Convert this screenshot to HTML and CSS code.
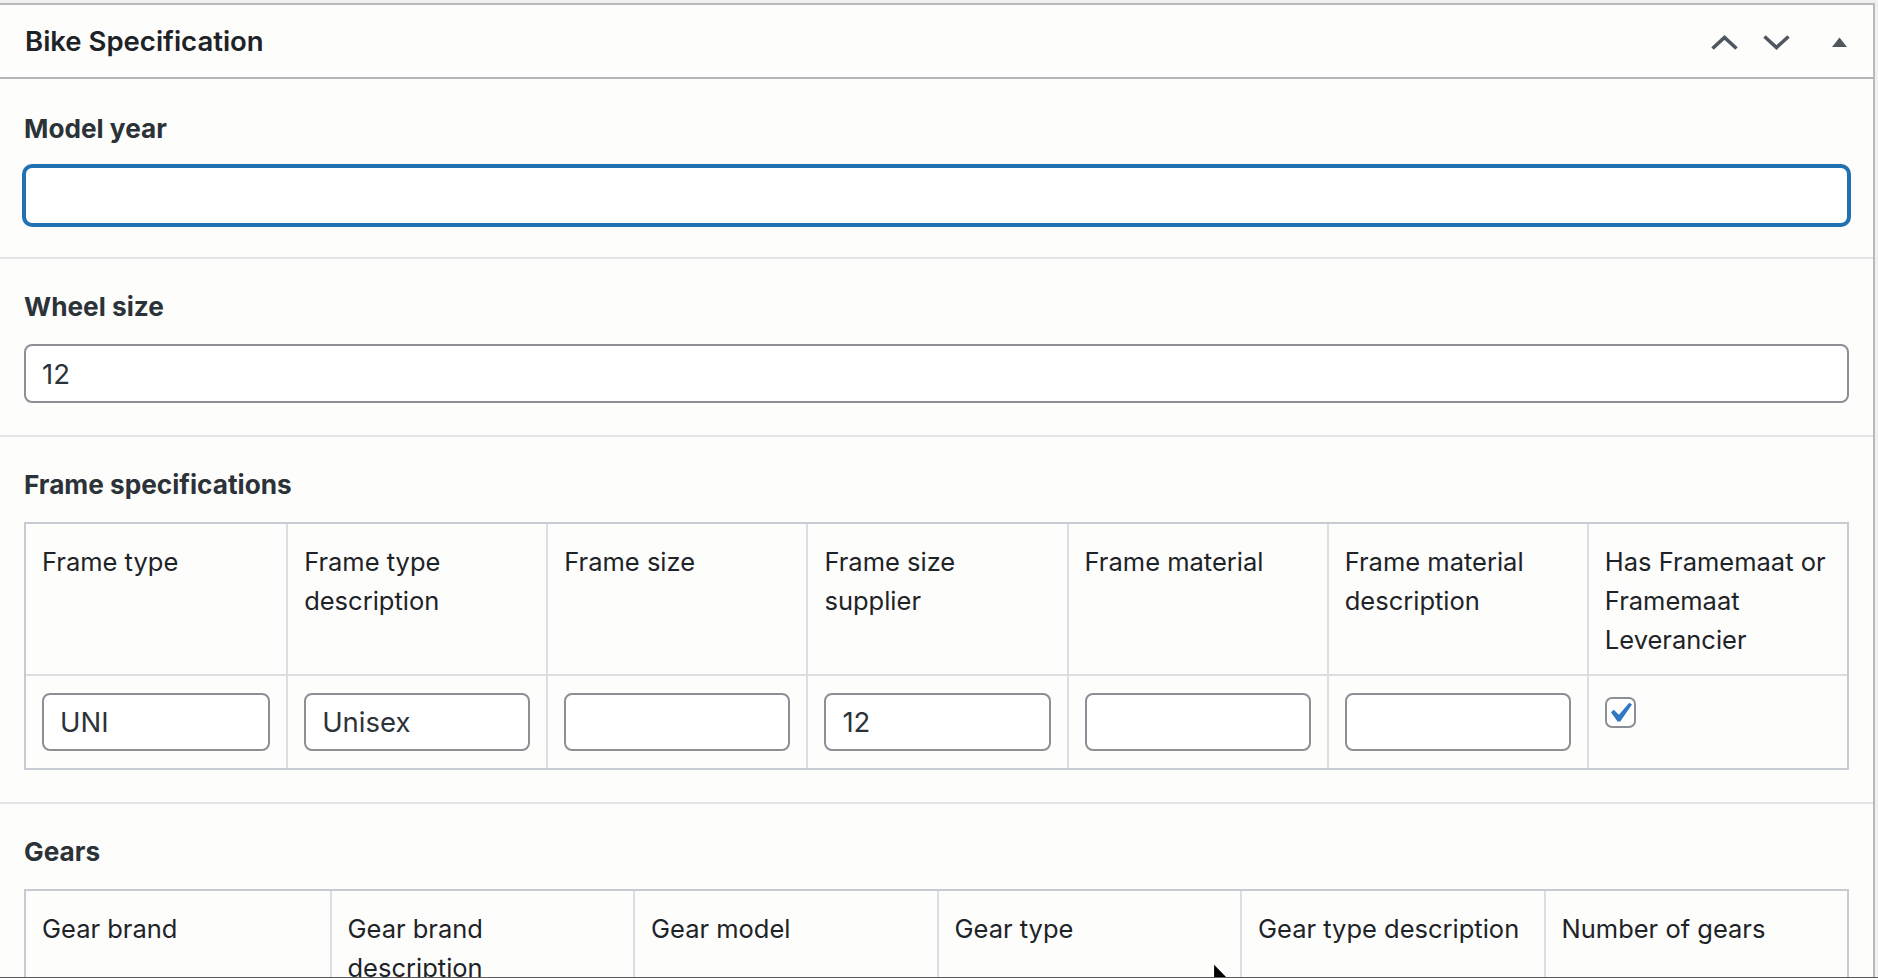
FILE: index.html
```html
<!DOCTYPE html>
<html lang="en">
<head>
<meta charset="utf-8">
<title>Bike Specification</title>
<link rel="stylesheet" href="styles.css">
</head>
<body>
<div class="postbox">
  <div class="postbox-header">
    <h2 class="hndle">Bike Specification</h2>
    <div class="handle-actions">
      <button class="handle-btn btn-up" type="button" aria-label="Move up">
        <svg width="27" height="15" viewBox="0 0 27 15"><polyline points="1.5,13.5 13.5,2.5 25.5,13.5" fill="none" stroke="currentColor" stroke-width="3.6"/></svg>
      </button>
      <button class="handle-btn btn-down" type="button" aria-label="Move down">
        <svg width="27" height="15" viewBox="0 0 27 15"><polyline points="1.5,1.5 13.5,12.5 25.5,1.5" fill="none" stroke="currentColor" stroke-width="3.6"/></svg>
      </button>
      <button class="handle-btn btn-toggle" type="button" aria-label="Toggle panel">
        <svg width="15" height="10" viewBox="0 0 15 10"><polygon points="0,10 7.5,0.6 15,10" fill="currentColor"/></svg>
      </button>
    </div>
  </div>

  <div class="inside">
    <div class="field first">
      <label class="field-label">Model year</label>
      <input class="text-input focused" type="text" value="">
    </div>

    <div class="field">
      <label class="field-label">Wheel size</label>
      <input class="text-input" type="text" value="12">
    </div>

    <div class="field">
      <label class="field-label">Frame specifications</label>
      <table class="acf-table frame-table">
        <thead>
          <tr>
            <th>Frame type</th>
            <th>Frame type description</th>
            <th>Frame size</th>
            <th>Frame size supplier</th>
            <th>Frame material</th>
            <th>Frame material description</th>
            <th>Has Framemaat or Framemaat Leverancier</th>
          </tr>
        </thead>
        <tbody>
          <tr>
            <td><input class="cell-input" type="text" value="UNI"></td>
            <td><input class="cell-input" type="text" value="Unisex"></td>
            <td><input class="cell-input" type="text" value=""></td>
            <td><input class="cell-input" type="text" value="12"></td>
            <td><input class="cell-input" type="text" value=""></td>
            <td><input class="cell-input" type="text" value=""></td>
            <td>
              <span class="checkbox" role="checkbox" aria-checked="true">
                <svg width="31" height="31" viewBox="2.81 2.07 15.34 15.34"><path d="M14.83 4.89l1.34.94-5.81 8.38H9.02L5.78 9.67l1.34-1.25 2.57 2.4z" fill="#2f78c4"/></svg>
              </span>
            </td>
          </tr>
        </tbody>
      </table>
    </div>

    <div class="field">
      <label class="field-label">Gears</label>
      <table class="acf-table gears-table">
        <thead>
          <tr>
            <th>Gear brand</th>
            <th>Gear brand description</th>
            <th>Gear model</th>
            <th>Gear type</th>
            <th>Gear type description</th>
            <th>Number of gears</th>
          </tr>
        </thead>
        <tbody>
          <tr>
            <td><input class="cell-input" type="text" value=""></td>
            <td><input class="cell-input" type="text" value=""></td>
            <td><input class="cell-input" type="text" value=""></td>
            <td><input class="cell-input" type="text" value=""></td>
            <td><input class="cell-input" type="text" value=""></td>
            <td><input class="cell-input" type="text" value=""></td>
          </tr>
        </tbody>
      </table>
    </div>
  </div>
</div>

<svg class="cursor" width="28" height="42" viewBox="0 0 28 42"><path d="M2,2 L2,36 L10,28.5 L15.5,40 L20.5,38 L15.2,26.8 L26,26.8 Z" fill="#000" stroke="#fff" stroke-width="2.2" stroke-linejoin="round"/></svg>
<div class="viewport-edge"></div>
</body>
</html>
```

FILE: styles.css
```css
html, body {
  margin: 0;
  height: 100%;
  overflow: hidden;
}

body {
  box-sizing: border-box;
  padding-top: 3px;
  background: #f0f0f1;
  font-family: Inter, "Noto Sans", sans-serif;
  color: #1d2327;
}

.postbox {
  box-sizing: border-box;
  width: 1875px;
  background: #fdfdfc;
  border-top: 2px solid #b9babd;
  border-right: 2px solid #b9babd;
}

.postbox-header {
  display: flex;
  align-items: center;
  justify-content: space-between;
  height: 72px;
  border-bottom: 2px solid #b4b5b8;
}

.hndle {
  margin: 0;
  padding: 2px 0 0 25px;
  font-size: 27.5px;
  font-weight: 600;
  line-height: 1;
  color: #1d2327;
}

.handle-actions {
  display: flex;
  align-self: stretch;
  padding-top: 2px;
}

.handle-btn {
  display: flex;
  align-items: center;
  justify-content: center;
  padding: 0;
  border: 0;
  background: none;
  color: #50575e;
  cursor: pointer;
}

.btn-up { width: 46px; }
.btn-down { width: 58px; }
.btn-toggle { width: 68px; }

.handle-btn svg { display: block; }

.field {
  padding: 30px 24px 32px;
  border-top: 2px solid #e4e5e7;
}

.field.first {
  border-top: 0;
  padding-top: 32px;
}

.field-label {
  display: block;
  margin-bottom: 19px;
  font-size: 26.2px;
  font-weight: 700;
  line-height: 36px;
  color: #2c3338;
}

.text-input,
.cell-input {
  display: block;
  box-sizing: border-box;
  width: 100%;
  margin: 0;
  padding: 0 16px;
  border: 2px solid #8c8f94;
  border-radius: 8px;
  background: #fff;
  font-family: Inter, "Noto Sans", sans-serif;
  font-size: 27.5px;
  color: #2c3338;
  outline: none;
}

.text-input { height: 59px; }
.cell-input { height: 58px; }

.text-input.focused {
  border-color: #2271b1;
  box-shadow: 0 0 0 2px #2271b1;
}

.acf-table {
  width: 100%;
  border-collapse: separate;
  border-spacing: 0;
  table-layout: fixed;
  border: 2px solid #c6cbd3;
}

.acf-table th {
  padding: 18px 16px 15px;
  border-left: 2px solid #dcdee2;
  border-bottom: 2px solid #dcdee2;
  text-align: left;
  vertical-align: top;
  font-size: 25.5px;
  font-weight: 400;
  line-height: 39px;
  color: #1d2327;
}

.acf-table td {
  padding: 17px 16px;
  border-left: 2px solid #dcdee2;
  vertical-align: top;
}

.acf-table th:first-child,
.acf-table td:first-child {
  border-left: 0;
}

.checkbox {
  display: block;
  width: 31px;
  height: 31px;
  margin-top: 4px;
  border-radius: 7px;
  background: #fff;
  box-shadow: inset 0 0 0 2px #8c8f94;
}

.checkbox svg { display: block; }

.cursor {
  position: fixed;
  left: 1211px;
  top: 960px;
}

.viewport-edge {
  position: fixed;
  left: 0;
  right: 0;
  bottom: 0;
  height: 1px;
  background: #5c5c5c;
}
```
